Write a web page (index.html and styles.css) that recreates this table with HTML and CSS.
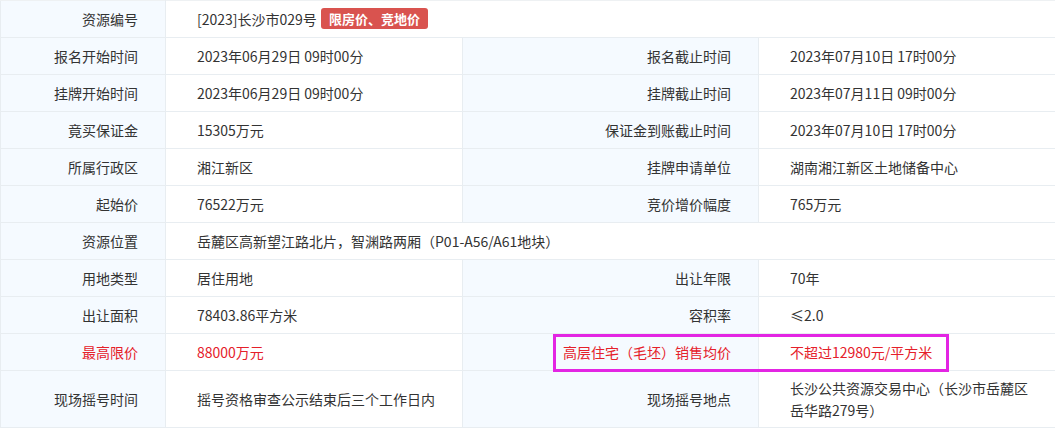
FILE: index.html
```html
<!DOCTYPE html>
<html>
<head>
    <title>资源信息</title>
    <meta charset="utf-8"/>
    <link rel="stylesheet" href="styles.css">
</head>
<body>
<div class="wrap">
    <table class="info">
        <colgroup>
            <col class="c-label">
            <col class="c-value">
            <col class="c-label2">
            <col class="c-value2">
        </colgroup>
        <tr>
            <th>资源编号</th>
            <td colspan="3">[2023]长沙市029号 <span class="badge">限房价、竞地价</span></td>
        </tr>
        <tr>
            <th>报名开始时间</th>
            <td>2023年06月29日 09时00分</td>
            <th>报名截止时间</th>
            <td>2023年07月10日 17时00分</td>
        </tr>
        <tr>
            <th>挂牌开始时间</th>
            <td>2023年06月29日 09时00分</td>
            <th>挂牌截止时间</th>
            <td>2023年07月11日 09时00分</td>
        </tr>
        <tr>
            <th>竟买保证金</th>
            <td>15305万元</td>
            <th>保证金到账截止时间</th>
            <td>2023年07月10日 17时00分</td>
        </tr>
        <tr>
            <th>所属行政区</th>
            <td>湘江新区</td>
            <th>挂牌申请单位</th>
            <td>湖南湘江新区土地储备中心</td>
        </tr>
        <tr>
            <th>起始价</th>
            <td>76522万元</td>
            <th>竞价增价幅度</th>
            <td>765万元</td>
        </tr>
        <tr>
            <th>资源位置</th>
            <td colspan="3">岳麓区高新望江路北片，智渊路两厢（P01-A56/A61地块）</td>
        </tr>
        <tr>
            <th>用地类型</th>
            <td>居住用地</td>
            <th>出让年限</th>
            <td>70年</td>
        </tr>
        <tr>
            <th>出让面积</th>
            <td>78403.86平方米</td>
            <th>容积率</th>
            <td>≤2.0</td>
        </tr>
        <tr class="red">
            <th>最高限价</th>
            <td>88000万元</td>
            <th>高层住宅（毛坯）销售均价</th>
            <td>不超过12980元/平方米</td>
        </tr>
        <tr class="tall">
            <th>现场摇号时间</th>
            <td>摇号资格审查公示结束后三个工作日内</td>
            <th>现场摇号地点</th>
            <td>长沙公共资源交易中心（长沙市岳麓区<br>岳华路279号）</td>
        </tr>
    </table>
    <div class="mark"></div>
</div>
</body>
</html>
```
FILE: styles.css
```css
body {
    margin: 0;
    background-color: #fff;
    font-family: "Microsoft YaHei", "Noto Sans CJK SC", sans-serif;
    font-size: 14px;
    color: #333;
}

.wrap {
    position: relative;
    width: 1070px;
}

.info {
    border-collapse: collapse;
    width: 1070px;
    table-layout: fixed;
}

.c-label { width: 165px; }
.c-value { width: 297px; }
.c-label2 { width: 296px; }
.c-value2 { width: 312px; }

.info th,
.info td {
    border: 1px solid #e8edf1;
    height: 36px;
    padding: 0;
    font-weight: normal;
    line-height: 22px;
}

.info th {
    background-color: #f5faff;
    text-align: right;
    padding-right: 27px;
}

.info td {
    text-align: left;
    padding-left: 31px;
}

.info tr:first-child th,
.info tr:first-child td {
    border-top-color: #eef1f3;
}

.tall th,
.tall td {
    height: 56px;
}

.red th,
.red td {
    color: #e5202a;
}

.badge {
    display: inline-block;
    background-color: #d9534f;
    color: #fff;
    font-weight: bold;
    font-size: 13px;
    line-height: 21px;
    padding: 0 8px;
    border-radius: 3px;
    margin-left: 1px;
    vertical-align: 1px;
}

/* highlight box drawn over the price row */
.mark {
    position: absolute;
    left: 553px;
    top: 334px;
    width: 390px;
    height: 32px;
    border: 3px solid #e325e3;
}
```
